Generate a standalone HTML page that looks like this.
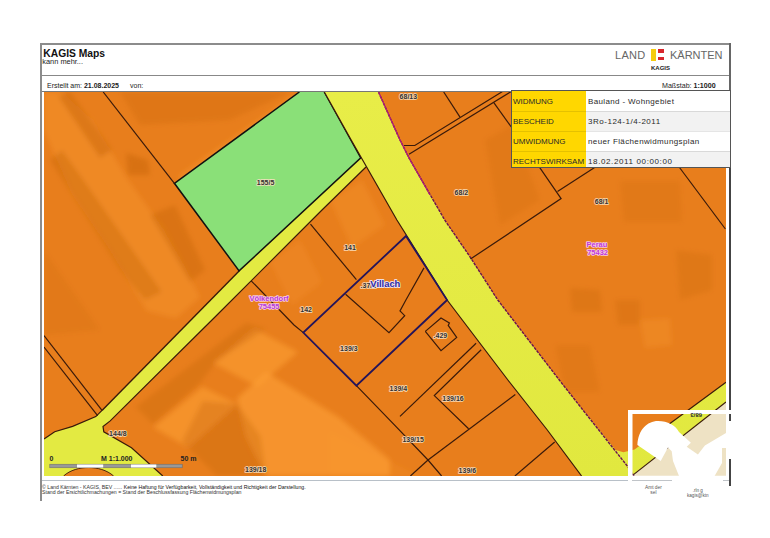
<!DOCTYPE html>
<html><head><meta charset="utf-8">
<style>
html,body{margin:0;padding:0;background:#fff;}
body{width:770px;height:538px;position:relative;overflow:hidden;font-family:"Liberation Sans",sans-serif;color:#222;}
.a{position:absolute;white-space:nowrap;}
svg{position:absolute;left:0;top:0;}
</style></head><body>
<svg width="770" height="538" viewBox="0 0 770 538">
<defs><clipPath id="mc"><rect x="44" y="92" width="682" height="384"/></clipPath></defs>
<g clip-path="url(#mc)">
<defs><linearGradient id="yg" gradientUnits="userSpaceOnUse" x1="0" y1="92" x2="0" y2="476"><stop offset="0" stop-color="#e8ed48"/><stop offset="1" stop-color="#e1e83f"/></linearGradient></defs>
<rect x="44" y="92" width="682" height="384" fill="#e87e1c"/>
<defs><filter id="bl" x="-10%" y="-10%" width="120%" height="120%"><feGaussianBlur stdDeviation="2.5"/></filter></defs><g filter="url(#bl)">
<polygon points="44,130 72,194 108,247 147,311 176,318 200,297 164,230 128,180 92,120 62,92 44,92" fill="#ffa236" fill-opacity="0.3"/>
<polygon points="50,160 120,270 145,300 162,292 85,182 62,150" fill="#b95c08" fill-opacity="0.3"/>
<polygon points="58,96 70,92 112,150 100,158" fill="#b95c08" fill-opacity="0.35"/>
<polygon points="150,215 175,205 205,270 190,282" fill="#b95c08" fill-opacity="0.3"/>
<polygon points="126,153 148,160 150,175 128,175" fill="#b95c08" fill-opacity="0.35"/>
<polygon points="120,92 290,92 230,120 140,125" fill="#b95c08" fill-opacity="0.2"/>
<polygon points="178,176 292,96 302,102 186,186" fill="#ffa236" fill-opacity="0.3"/>
<polygon points="44,250 100,330 44,335" fill="#b95c08" fill-opacity="0.12"/>
<polygon points="214,363.5 254.6,328.7 298,352 257.5,386.7" fill="#ffa236" fill-opacity="0.55"/>
<polygon points="153.2,427.2 202.5,386.7 237.2,404 188,447.5" fill="#ffa236" fill-opacity="0.55"/>
<polygon points="237.2,398 266.2,372 340,418 390,460 390,476 266.2,476 246,436" fill="#ffa236" fill-opacity="0.6"/>
<polygon points="135.8,407 246,322.9 266.2,328.7 217,360.6 199.6,383.8 153.2,424.3" fill="#b95c08" fill-opacity="0.25"/>
<polygon points="202.5,401 237.2,404 260.4,436 266.2,476 217,476 182,441.7" fill="#b95c08" fill-opacity="0.25"/>
<polygon points="330,433 420,476 330,476" fill="#ffa236" fill-opacity="0.15"/>
<polygon points="330,200 362,180 385,225 352,248" fill="#ffa236" fill-opacity="0.22"/>
<polygon points="270,262 300,240 322,282 292,305" fill="#ffa236" fill-opacity="0.18"/>
<polygon points="570,288 600,290 602,312 572,312" fill="#b95c08" fill-opacity="0.22"/>
<polygon points="615,300 640,300 640,325 618,325" fill="#b95c08" fill-opacity="0.2"/>
<polygon points="555,345 590,345 600,392 565,392" fill="#b95c08" fill-opacity="0.15"/>
<polygon points="620,181 680,181 682,222 624,222" fill="#b95c08" fill-opacity="0.15"/>
<polygon points="676,250 712,255 712,290 680,300" fill="#b95c08" fill-opacity="0.18"/>
<polygon points="640,320 670,318 672,345 645,348" fill="#ffa236" fill-opacity="0.22"/>
<polygon points="485,140 512,125 540,200 500,225" fill="#b95c08" fill-opacity="0.15"/>
</g>
<polygon points="174.4,183.3 299.4,92 324.3,92 360.8,157.8 239.1,270.9" fill="#8ae078" />
<path d="M364,150 L360.8,157.8 L239.1,270.9 L102,410.4 L95.8,416.6 L72.6,426.4 L54.7,431.8 L44,439 L44,476 L63.6,476 C70,470 80,467.5 88.6,467.5 C97,467.5 107,470 113.6,476 L162.8,476 L131.5,447.8 L103.8,431.8 L103,426.4 L110.2,420.9 L215.5,316.5 L322,210 L366,167 L372,163 Z" fill="#e3ea42"/>
<polyline points="102,410.4 95.8,416.6 72.6,426.4 54.7,431.8 44,439" fill="none" stroke="#3a1a0a" stroke-width="1.2" />
<polyline points="239.1,270.9 102,410.4" fill="none" stroke="#3a1a0a" stroke-width="1.4" />
<polyline points="299.4,92 174.4,183.3 239.1,270.9 360.8,157.8 324.3,92" fill="none" stroke="#111" stroke-width="1.5" />
<polyline points="366,167 322,210 215.5,316.5 110.2,420.9 103,426.4 103.8,431.8 131.5,447.8 162.8,476" fill="none" stroke="#3a1a0a" stroke-width="1.2" />
<path d="M63.6,476 C70,470 80,467.5 88.6,467.5 C97,467.5 107,470 113.6,476" fill="#e87e1c" stroke="#3a1a0a" stroke-width="0.9"/>
<polygon points="324.3,92 351.2,140 396.9,220 447.1,300 507.9,380 547.3,430 581.6,476 726,476 726,382.2 682.9,413.9 641.3,444.5 634.6,449.5 623.4,452.3 615.6,450.1 580,406.3 559.3,380 497.8,300 470,256.8 444.7,220 409.4,158.7 400,140 378.5,92" fill="url(#yg)" />
<polygon points="726,402 633.5,474.6 632,476 726,476" fill="#eee2c4" />
<polyline points="324.3,92 351.2,140 396.9,220 447.1,300 507.9,380 547.3,430 581.6,476" fill="none" stroke="#3a1a0a" stroke-width="1.2" />
<polyline points="378.5,92 400,140 409.4,158.7 444.7,220 470,256.8 497.8,300 559.3,380 580,406.3 627.9,466.8 634,476" fill="none" stroke="#6a1250" stroke-width="1.4" stroke-dasharray="3,1"/>
<polyline points="378.5,92 400,140 409.4,158.7 430,195" fill="none" stroke="#b01a78" stroke-width="1.2" />
<polyline points="726,382.2 682.9,413.9 641.3,444.5" fill="none" stroke="#3a1a0a" stroke-width="1.2" />
<polyline points="726,402 633.5,474.6" fill="none" stroke="#3a1a0a" stroke-width="1.2" />
<polyline points="103.2,92 174.4,183.3" fill="none" stroke="#3a1a0a" stroke-width="1.2" />
<polyline points="44,335.5 102,410.4" fill="none" stroke="#3a1a0a" stroke-width="1.2" />
<polyline points="44,347 97.6,415.7" fill="none" stroke="#3a1a0a" stroke-width="1.2" />
<polyline points="251.2,280.8 294,325 303.3,332.6" fill="none" stroke="#3a1a0a" stroke-width="1.2" />
<polyline points="310.5,224.2 356.4,279.7" fill="none" stroke="#3a1a0a" stroke-width="1.2" />
<polyline points="356.4,385.7 393.9,424.4 428,460 441.6,476" fill="none" stroke="#3a1a0a" stroke-width="1.2" />
<polyline points="345.6,294.2 389,332.6 404.7,315.7 400,310.9 405.9,300 424,267.9" fill="none" stroke="#3a1a0a" stroke-width="1.2" />
<polyline points="400,416.4 476.1,343.2" fill="none" stroke="#3a1a0a" stroke-width="1.2" />
<polyline points="428,460 515.3,394.5" fill="none" stroke="#3a1a0a" stroke-width="1.2" />
<polyline points="410.4,476 428,460" fill="none" stroke="#3a1a0a" stroke-width="1.2" />
<polyline points="481.2,349.7 434.3,395.6 468.6,428.8" fill="none" stroke="#3a1a0a" stroke-width="1.2" />
<polyline points="554.7,442 514.9,476" fill="none" stroke="#3a1a0a" stroke-width="1.2" />
<polyline points="425.3,331.4 441,318.1 449.4,323 448.2,325.4 456.7,337.4 441,350.7 425.3,331.4" fill="none" stroke="#3a1a0a" stroke-width="1.2" />
<polyline points="443.7,92 460,117.2" fill="none" stroke="#3a1a0a" stroke-width="1.2" />
<polyline points="404,145.5 414.8,145.5 502.5,91.5" fill="none" stroke="#3a1a0a" stroke-width="1.2" />
<polyline points="409,154.3 512,91" fill="none" stroke="#3a1a0a" stroke-width="1.2" />
<polyline points="493.8,102.6 511.3,127" fill="none" stroke="#3a1a0a" stroke-width="1.2" />
<polyline points="470.5,259 561.1,198.6 539.4,167.2" fill="none" stroke="#3a1a0a" stroke-width="1.2" />
<polyline points="557.5,191.4 595,167.2" fill="none" stroke="#3a1a0a" stroke-width="1.2" />
<polyline points="679.5,167.5 725.4,229" fill="none" stroke="#3a1a0a" stroke-width="1.2" />
<polygon points="406,236 447.1,300 356.4,385.7 303.3,332.6" fill="none" stroke="#24145a" stroke-width="1.8"/>
<g font-family="Liberation Sans">
<text x="256.8" y="185.2" font-size="7" font-weight="bold" fill="#333" stroke="rgba(250,225,195,0.8)" stroke-width="1.8" paint-order="stroke" stroke-linejoin="round">155/5</text>
<text x="344.2" y="250.3" font-size="7" font-weight="bold" fill="#333" stroke="rgba(250,225,195,0.8)" stroke-width="1.8" paint-order="stroke" stroke-linejoin="round">141</text>
<text x="300.3" y="312.1" font-size="7" font-weight="bold" fill="#333" stroke="rgba(250,225,195,0.8)" stroke-width="1.8" paint-order="stroke" stroke-linejoin="round">142</text>
<text x="340.1" y="350.8" font-size="7" font-weight="bold" fill="#333" stroke="rgba(250,225,195,0.8)" stroke-width="1.8" paint-order="stroke" stroke-linejoin="round">139/3</text>
<text x="389.6" y="391.4" font-size="7" font-weight="bold" fill="#333" stroke="rgba(250,225,195,0.8)" stroke-width="1.8" paint-order="stroke" stroke-linejoin="round">139/4</text>
<text x="442.3" y="400.6" font-size="7" font-weight="bold" fill="#333" stroke="rgba(250,225,195,0.8)" stroke-width="1.8" paint-order="stroke" stroke-linejoin="round">139/16</text>
<text x="402.4" y="441.9" font-size="7" font-weight="bold" fill="#333" stroke="rgba(250,225,195,0.8)" stroke-width="1.8" paint-order="stroke" stroke-linejoin="round">139/15</text>
<text x="245" y="472.1" font-size="7" font-weight="bold" fill="#333" stroke="rgba(250,225,195,0.8)" stroke-width="1.8" paint-order="stroke" stroke-linejoin="round">139/18</text>
<text x="458.6" y="473.1" font-size="7" font-weight="bold" fill="#333" stroke="rgba(250,225,195,0.8)" stroke-width="1.8" paint-order="stroke" stroke-linejoin="round">139/6</text>
<text x="109.1" y="436.4" font-size="7" font-weight="bold" fill="#333" stroke="rgba(250,225,195,0.8)" stroke-width="1.8" paint-order="stroke" stroke-linejoin="round">144/8</text>
<text x="399.6" y="98.6" font-size="7" font-weight="bold" fill="#333" stroke="rgba(250,225,195,0.8)" stroke-width="1.8" paint-order="stroke" stroke-linejoin="round">68/13</text>
<text x="454.6" y="194.7" font-size="7" font-weight="bold" fill="#333" stroke="rgba(250,225,195,0.8)" stroke-width="1.8" paint-order="stroke" stroke-linejoin="round">68/2</text>
<text x="594.8" y="203.6" font-size="7" font-weight="bold" fill="#333" stroke="rgba(250,225,195,0.8)" stroke-width="1.8" paint-order="stroke" stroke-linejoin="round">68/1</text>
<text x="433.6" y="338.2" font-size="7" font-weight="bold" fill="#333" stroke="rgba(250,225,195,0.8)" stroke-width="1.8" paint-order="stroke" stroke-linejoin="round">.429</text>
<text x="360.6" y="288.2" font-size="7" font-weight="bold" fill="#333" stroke="rgba(250,225,195,0.8)" stroke-width="1.8" paint-order="stroke" stroke-linejoin="round">.37/1</text>
<text x="370.3" y="286.9" font-size="9.4" font-weight="bold" fill="#2b2aa8" stroke="rgba(240,235,255,0.9)" stroke-width="1.8" paint-order="stroke" stroke-linejoin="round">Villach</text>
<text x="249.4" y="300.6" font-size="7.5" font-weight="bold" fill="#b83ad8" stroke="rgba(250,215,250,0.9)" stroke-width="1.6" paint-order="stroke" stroke-linejoin="round">Völkendorf</text>
<text x="258.7" y="309.1" font-size="7.5" font-weight="bold" fill="#b83ad8" stroke="rgba(250,215,250,0.9)" stroke-width="1.6" paint-order="stroke" stroke-linejoin="round">75455</text>
<text x="586.5" y="247" font-size="7.5" font-weight="bold" fill="#c03ad8" stroke="rgba(250,215,250,0.9)" stroke-width="1.6" paint-order="stroke" stroke-linejoin="round">Perau</text>
<text x="587.2" y="254.7" font-size="7.5" font-weight="bold" fill="#c03ad8" stroke="rgba(250,215,250,0.9)" stroke-width="1.6" paint-order="stroke" stroke-linejoin="round">75432</text>
<g font-size="7" font-weight="bold" fill="#222"><text x="49.5" y="461">0</text><text x="101" y="461">M 1:1.000</text><text x="180.5" y="461">50 m</text></g>
<rect x="49.8" y="464.2" width="132.4" height="3.6" fill="#999" stroke="#666" stroke-width="0.5"/>
<rect x="77" y="464.5" width="26.2" height="3" fill="#fff"/><rect x="131" y="464.5" width="25.3" height="3" fill="#fff"/>
</g>
</g>
<path d="M628,410 H731 V481 H628 Z M632.5,414 V475.7 H726 V414 Z" fill="#fff" fill-rule="evenodd"/>
<path d="M637.4,445 C638,430 647,421 658,421 C668,421 675,425 679,432 L690.9,442.7 L686.7,446.8 L697.9,454.5 L704.9,445.4 L726,432.9 L726,448 L722,448 L722,463 L714.6,476 L679,476 L673,461 L671.7,451.3 L668,447.6 L660.7,461.1 Z" fill="#fff"/>
<text x="688" y="419.5" font-size="6" font-weight="bold" fill="#333" transform="rotate(180 695 416)" font-family="Liberation Sans">68/3</text>
</svg>
<div class="a" style="left:40px;top:43px;width:2px;height:458px;background:#8c8c8c"></div>
<div class="a" style="left:40px;top:43px;width:691px;height:2px;background:#8c8c8c"></div>
<div class="a" style="left:729px;top:43px;width:2px;height:124px;background:#666"></div>
<div class="a" style="left:729px;top:167px;width:2px;height:243px;background:#444"></div>
<div class="a" style="left:729px;top:459px;width:2px;height:27px;background:#444"></div>
<div class="a" style="left:729px;top:414px;width:2px;height:7px;background:#444"></div>
<div class="a" style="left:42px;top:75px;width:687px;height:1px;background:#888"></div>
<div class="a" style="left:42px;top:91px;width:687px;height:1px;background:#777"></div>
<div class="a" style="left:42px;top:480px;width:586px;height:1px;background:#b8c0c8"></div>

<div class="a" style="left:43.3px;top:47.7px;font-size:10.3px;font-weight:bold;color:#111;">KAGIS Maps</div>
<div class="a" style="left:42.3px;top:56.8px;font-size:7.4px;color:#222;">kann mehr...</div>
<div class="a" style="left:47px;top:81.5px;font-size:7px;color:#222;">Erstellt am: <b>21.08.2025</b></div>
<div class="a" style="left:130px;top:81.5px;font-size:7px;color:#222;">von:</div>

<div class="a" style="left:615px;top:49px;font-size:11px;color:#666;letter-spacing:0.3px">LAND</div>
<div class="a" style="left:650.8px;top:49.3px;width:5px;height:11.5px;background:#f5cc10"></div>
<div class="a" style="left:657.7px;top:49.3px;width:6px;height:3.4px;background:#d8262c"></div>
<div class="a" style="left:657.7px;top:57.2px;width:6px;height:3.3px;background:#d8262c"></div>
<div class="a" style="left:670px;top:49px;font-size:11px;color:#666;letter-spacing:0px">KÄRNTEN</div>
<div class="a" style="left:651px;top:64.8px;font-size:6px;font-weight:bold;color:#222;">KAGIS</div>
<div class="a" style="left:662px;top:81.5px;font-size:7.1px;color:#222;">Maßstab: <b>1:1000</b></div>

<div class="a" style="left:511px;top:90px;width:218px;height:76px;border:1px solid #555;background:#fff;overflow:hidden;font-size:8px;color:#2a2a2a;">
 <div class="a" style="left:0;top:0;width:74px;height:76px;background:#ffd700"></div>
 <div class="a" style="left:74px;top:20px;width:144px;height:20px;background:#f2f2f2"></div>
 <div class="a" style="left:74px;top:60px;width:144px;height:20px;background:#f2f2f2"></div>
 <div class="a" style="left:0;top:19.5px;width:218px;height:1px;background:rgba(0,0,0,0.1)"></div>
 <div class="a" style="left:0;top:39.5px;width:218px;height:1px;background:rgba(0,0,0,0.1)"></div>
 <div class="a" style="left:0;top:59.5px;width:218px;height:1px;background:rgba(0,0,0,0.1)"></div>
 <div class="a" style="left:1px;top:6px;">WIDMUNG</div>
 <div class="a" style="left:1px;top:26px;">BESCHEID</div>
 <div class="a" style="left:1px;top:46px;">UMWIDMUNG</div>
 <div class="a" style="left:1px;top:66px;">RECHTSWIRKSAM</div>
 <div class="a" style="left:76px;top:6px;letter-spacing:0.36px">Bauland - Wohngebiet</div>
 <div class="a" style="left:76px;top:26px;letter-spacing:0.52px">3Ro-124-1/4-2011</div>
 <div class="a" style="left:76px;top:46px;letter-spacing:0.37px">neuer Flächenwidmungsplan</div>
 <div class="a" style="left:76px;top:66px;letter-spacing:0.62px">18.02.2011 00:00:00</div>
</div>

<div class="a" style="left:42px;top:484.6px;font-size:5.2px;color:#333;line-height:5.2px;">© Land Kärnten - KAGIS, BEV ...... <span style="color:#111">Keine Haftung für Verfügbarkeit, Vollständigkeit und Richtigkeit der Darstellung.</span><br>Stand der Ersichtlichmachungen = Stand der Beschlussfassung Flächenwidmungsplan</div>
<div class="a" style="left:645px;top:484.6px;font-size:4.8px;color:#555;line-height:5.4px;text-align:center">Amt der<br>sel</div>
<div class="a" style="left:632px;top:480px;width:40px;height:1px;background:#c0c4c8"></div>
<div class="a" style="left:723px;top:480px;width:6px;height:1px;background:#c0c4c8"></div>
<div class="a" style="left:687px;top:489px;font-size:4.6px;color:#555;line-height:4.8px;text-align:center">.rln g<br>kagis@ktn</div>
</body></html>
